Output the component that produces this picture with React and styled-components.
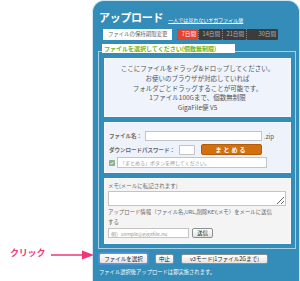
import React from "react";
import styled, { createGlobalStyle } from "styled-components";

const GlobalStyle = createGlobalStyle`
  html, body {
    margin: 0;
    padding: 0;
    background: #fff;
  }
  body {
    font-family: "Noto Sans CJK JP", "Noto Sans", sans-serif;
  }
  * {
    box-sizing: border-box;
  }
`;

const TABS = [
  { label: "7日間", width: 21, active: true },
  { label: "14日間", width: 24 },
  { label: "21日間", width: 24 },
  { label: "30日間", width: 32 },
];

const DROP_LINES = [
  "ここにファイルをドラッグ&ドロップしてください。",
  "お使いのブラウザが対応していれば",
  "フォルダごとドラッグすることが可能です。",
  "1ファイル100Gまで、個数無制限",
  "GigaFile便 V5",
];

const App = () => {
  return (
    <Page>
      <GlobalStyle />
      <Aside>
        <Callout>
          <CalloutLabel>クリック</CalloutLabel>
          <svg width="43" height="10" viewBox="0 0 43 10">
            <path d="M0 5 L33 5" stroke="#f0357a" strokeWidth="1.6" />
            <path d="M31 0.5 L43 5 L31 9.5 Z" fill="#f0357a" />
          </svg>
        </Callout>
      </Aside>

      <Panel>
        <Header>
          <Title>アップロード</Title>
          <SubLink href="#">一人では見れないギガファイル便</SubLink>
        </Header>

        <OptionsRow>
          <KeepBox>ファイルの保持期限変更</KeepBox>
          <TabGroup>
            {TABS.map((t) => (
              <Tab key={t.label} $active={t.active} $width={t.width}>
                {t.label}
              </Tab>
            ))}
          </TabGroup>
        </OptionsRow>

        <Fieldset>
          <Legend>ファイルを選択してください(個数無制限)</Legend>

          <DropArea>
            {DROP_LINES.map((l) => (
              <div key={l}>{l}</div>
            ))}
          </DropArea>

          <FormBox>
            <FormRow>
              <FieldLabel $width={36}>ファイル名：</FieldLabel>
              <TextInput $width={117} />
              <Ext>.zip</Ext>
            </FormRow>
            <FormRow $gap={3}>
              <FieldLabel $width={70}>ダウンロードパスワード：</FieldLabel>
              <TextInput $width={16} />
              <MergeButton>まとめる</MergeButton>
            </FormRow>
            <FormRow $gap={2}>
              <svg width="6" height="6" viewBox="0 0 6 6">
                <rect x="0" y="0" width="6" height="6" rx="1" fill="#8fae8f" />
                <path d="M1.5 3 L2.6 4.2 L4.6 1.8" stroke="#fff" strokeWidth="0.9" fill="none" />
              </svg>
              <TextInput
                $width={150}
                $height={11}
                $gap={2}
                placeholder="「まとめる」ボタンを押してください。"
              />
            </FormRow>
          </FormBox>

          <MemoBox>
            <MemoLabel>メモ(メールに転記されます)</MemoLabel>
            <MemoArea />
            <MemoNote>
              アップロード情報（ファイル名,URL,削除KEY,メモ）をメールに送信
              <br />
              する
            </MemoNote>
            <EmailRow>
              <TextInput $width={81} placeholder="例）sample@gigafile.nu" />
              <SmallButton $width={21}>送信</SmallButton>
            </EmailRow>
          </MemoBox>
        </Fieldset>

        <ButtonRow>
          <SmallButton $width={49} $focused>
            ファイルを選択
          </SmallButton>
          <SmallButton $width={19}>中止</SmallButton>
          <SmallButton $width={87}>v3モード(1ファイル2Gまで)</SmallButton>
        </ButtonRow>

        <Notice>ファイル選択後アップロードは即実施されます。</Notice>
      </Panel>
    </Page>
  );
};

const Page = styled.div`
  display: flex;
  width: 300px;
  height: 281px;
  overflow: hidden;
`;

const Aside = styled.div`
  width: 92px;
  flex: none;
  display: flex;
  align-items: flex-end;
  padding: 0 0 18px 10px;
`;

const Callout = styled.div`
  position: relative;
  z-index: 1;
  display: flex;
  align-items: center;
  gap: 6px;
  flex: none;
`;

const CalloutLabel = styled.span`
  font-size: 9px;
  line-height: 11px;
  font-weight: 700;
  color: #f0357a;
  margin-bottom: 5px;
  letter-spacing: -0.2px;
`;

const Panel = styled.div`
  flex: 1;
  display: flex;
  flex-direction: column;
  background: #348cb9;
  border: 1px solid #cfe6f1;
  border-bottom: none;
  border-radius: 12px 12px 0 0;
`;

const Header = styled.div`
  display: flex;
  align-items: baseline;
  gap: 5px;
  height: 28px;
  padding: 9px 0 0 6px;
`;

const Title = styled.h1`
  margin: 0;
  font-size: 11px;
  line-height: 14px;
  font-weight: 700;
  color: #fff;
  letter-spacing: -0.3px;
`;

const SubLink = styled.a`
  font-size: 5px;
  color: #fff;
  text-decoration: underline;
`;

const OptionsRow = styled.div`
  display: flex;
  align-items: stretch;
  gap: 5px;
  height: 11px;
  margin-left: 10px;
`;

const KeepBox = styled.div`
  width: 69px;
  background: #fff;
  color: #666;
  font-size: 5.4px;
  line-height: 11px;
  padding-left: 5px;
  white-space: nowrap;
`;

const TabGroup = styled.div`
  display: flex;
  background: #3c3c3c;
  border-radius: 2px;
  overflow: hidden;
`;

const Tab = styled.div`
  width: ${(p) => p.$width}px;
  background: ${(p) => (p.$active ? "#e3432f" : "#3c3c3c")};
  color: ${(p) => (p.$active ? "#fff" : "#b5b5b5")};
  font-size: 5.6px;
  line-height: 11px;
  text-align: right;
  padding-right: 2px;
  white-space: nowrap;
  & + & {
    border-left: 1px dotted #8a8a8a;
  }
`;

const Fieldset = styled.div`
  margin: 11px 3px 0 5px;
  border: 1px solid #a9cfe2;
  padding: 0 4px 4px 5px;
`;

const Legend = styled.div`
  width: 133px;
  height: 9px;
  margin: -8px 0 0 -2px;
  padding-left: 2px;
  background: #fff;
  color: #6db52a;
  font-size: 6px;
  line-height: 9px;
  font-weight: 700;
  white-space: nowrap;
`;

const DropArea = styled.div`
  margin-top: 5px;
  height: 59px;
  padding-top: 5px;
  background: #eef3fc;
  border: 1px solid #f7f9fe;
  color: #555;
  font-size: 6.5px;
  line-height: 9.75px;
  text-align: center;
  white-space: nowrap;
`;

const FormBox = styled.div`
  margin-top: 5px;
  height: 51px;
  padding: 8px 0 0 4px;
  background: #eef2fa;
  border: 1px solid #f7f9fe;
`;

const FormRow = styled.div`
  display: flex;
  align-items: center;
  margin-top: ${(p) => p.$gap || 0}px;
`;

const FieldLabel = styled.span`
  width: ${(p) => p.$width}px;
  flex: none;
  font-size: 5.5px;
  color: #666;
  font-weight: 700;
  white-space: nowrap;
`;

const TextInput = styled.input`
  width: ${(p) => p.$width}px;
  height: ${(p) => p.$height || 10}px;
  margin: 0 0 0 ${(p) => p.$gap || 0}px;
  padding: 0 2px;
  border: 1px solid #c4c4c4;
  background: #fff;
  font-family: inherit;
  font-size: 5px;
  color: #555;
  outline: none;
  &::placeholder {
    color: #999;
  }
`;

const Ext = styled.span`
  margin-left: 2px;
  font-size: 6px;
  color: #555;
`;

const MergeButton = styled.button`
  width: 61px;
  height: 11px;
  margin-left: 6px;
  padding: 0;
  border: 1px solid #b65c06;
  border-radius: 2px;
  background: #d2700f;
  color: #fff;
  font-family: inherit;
  font-size: 6px;
  line-height: 9px;
  font-weight: 700;
  letter-spacing: 2px;
`;

const MemoBox = styled.div`
  margin-top: 5px;
  height: 66px;
  padding: 3px 0 0 3px;
  background: #f4f4f4;
  border: 1px solid #fbfbfb;
`;

const MemoLabel = styled.div`
  font-size: 5.5px;
  line-height: 8px;
  color: #666;
`;

const MemoArea = styled.textarea`
  display: block;
  width: 178px;
  height: 15px;
  margin: 1px 0 0;
  padding: 1px;
  border: 1px solid #c4c4c4;
  background: #fff;
  font-size: 5px;
`;

const MemoNote = styled.div`
  margin-top: 2px;
  font-size: 5.4px;
  line-height: 9.5px;
  color: #666;
  white-space: nowrap;
`;

const EmailRow = styled.div`
  display: flex;
  align-items: center;
  gap: 3px;
  margin-top: 1px;
`;

const SmallButton = styled.button`
  width: ${(p) => p.$width}px;
  height: ${(p) => (p.$focused ? 11 : 10)}px;
  padding: 0;
  border: 1px solid #8e8e8e;
  border-radius: 2px;
  background: linear-gradient(#ffffff, #e4e4e4);
  color: #222;
  font-family: inherit;
  font-size: 5.5px;
  line-height: 8px;
  white-space: nowrap;
  box-shadow: ${(p) => (p.$focused ? "0 0 0 1px #4b8fd6" : "none")};
`;

const ButtonRow = styled.div`
  display: flex;
  align-items: center;
  gap: 7px;
  margin: 4px 0 0 6px;
  height: 11px;
`;

const Notice = styled.div`
  margin: 4px 0 0 6px;
  font-size: 5.3px;
  line-height: 8px;
  color: #fff;
  white-space: nowrap;
`;

export default App;
